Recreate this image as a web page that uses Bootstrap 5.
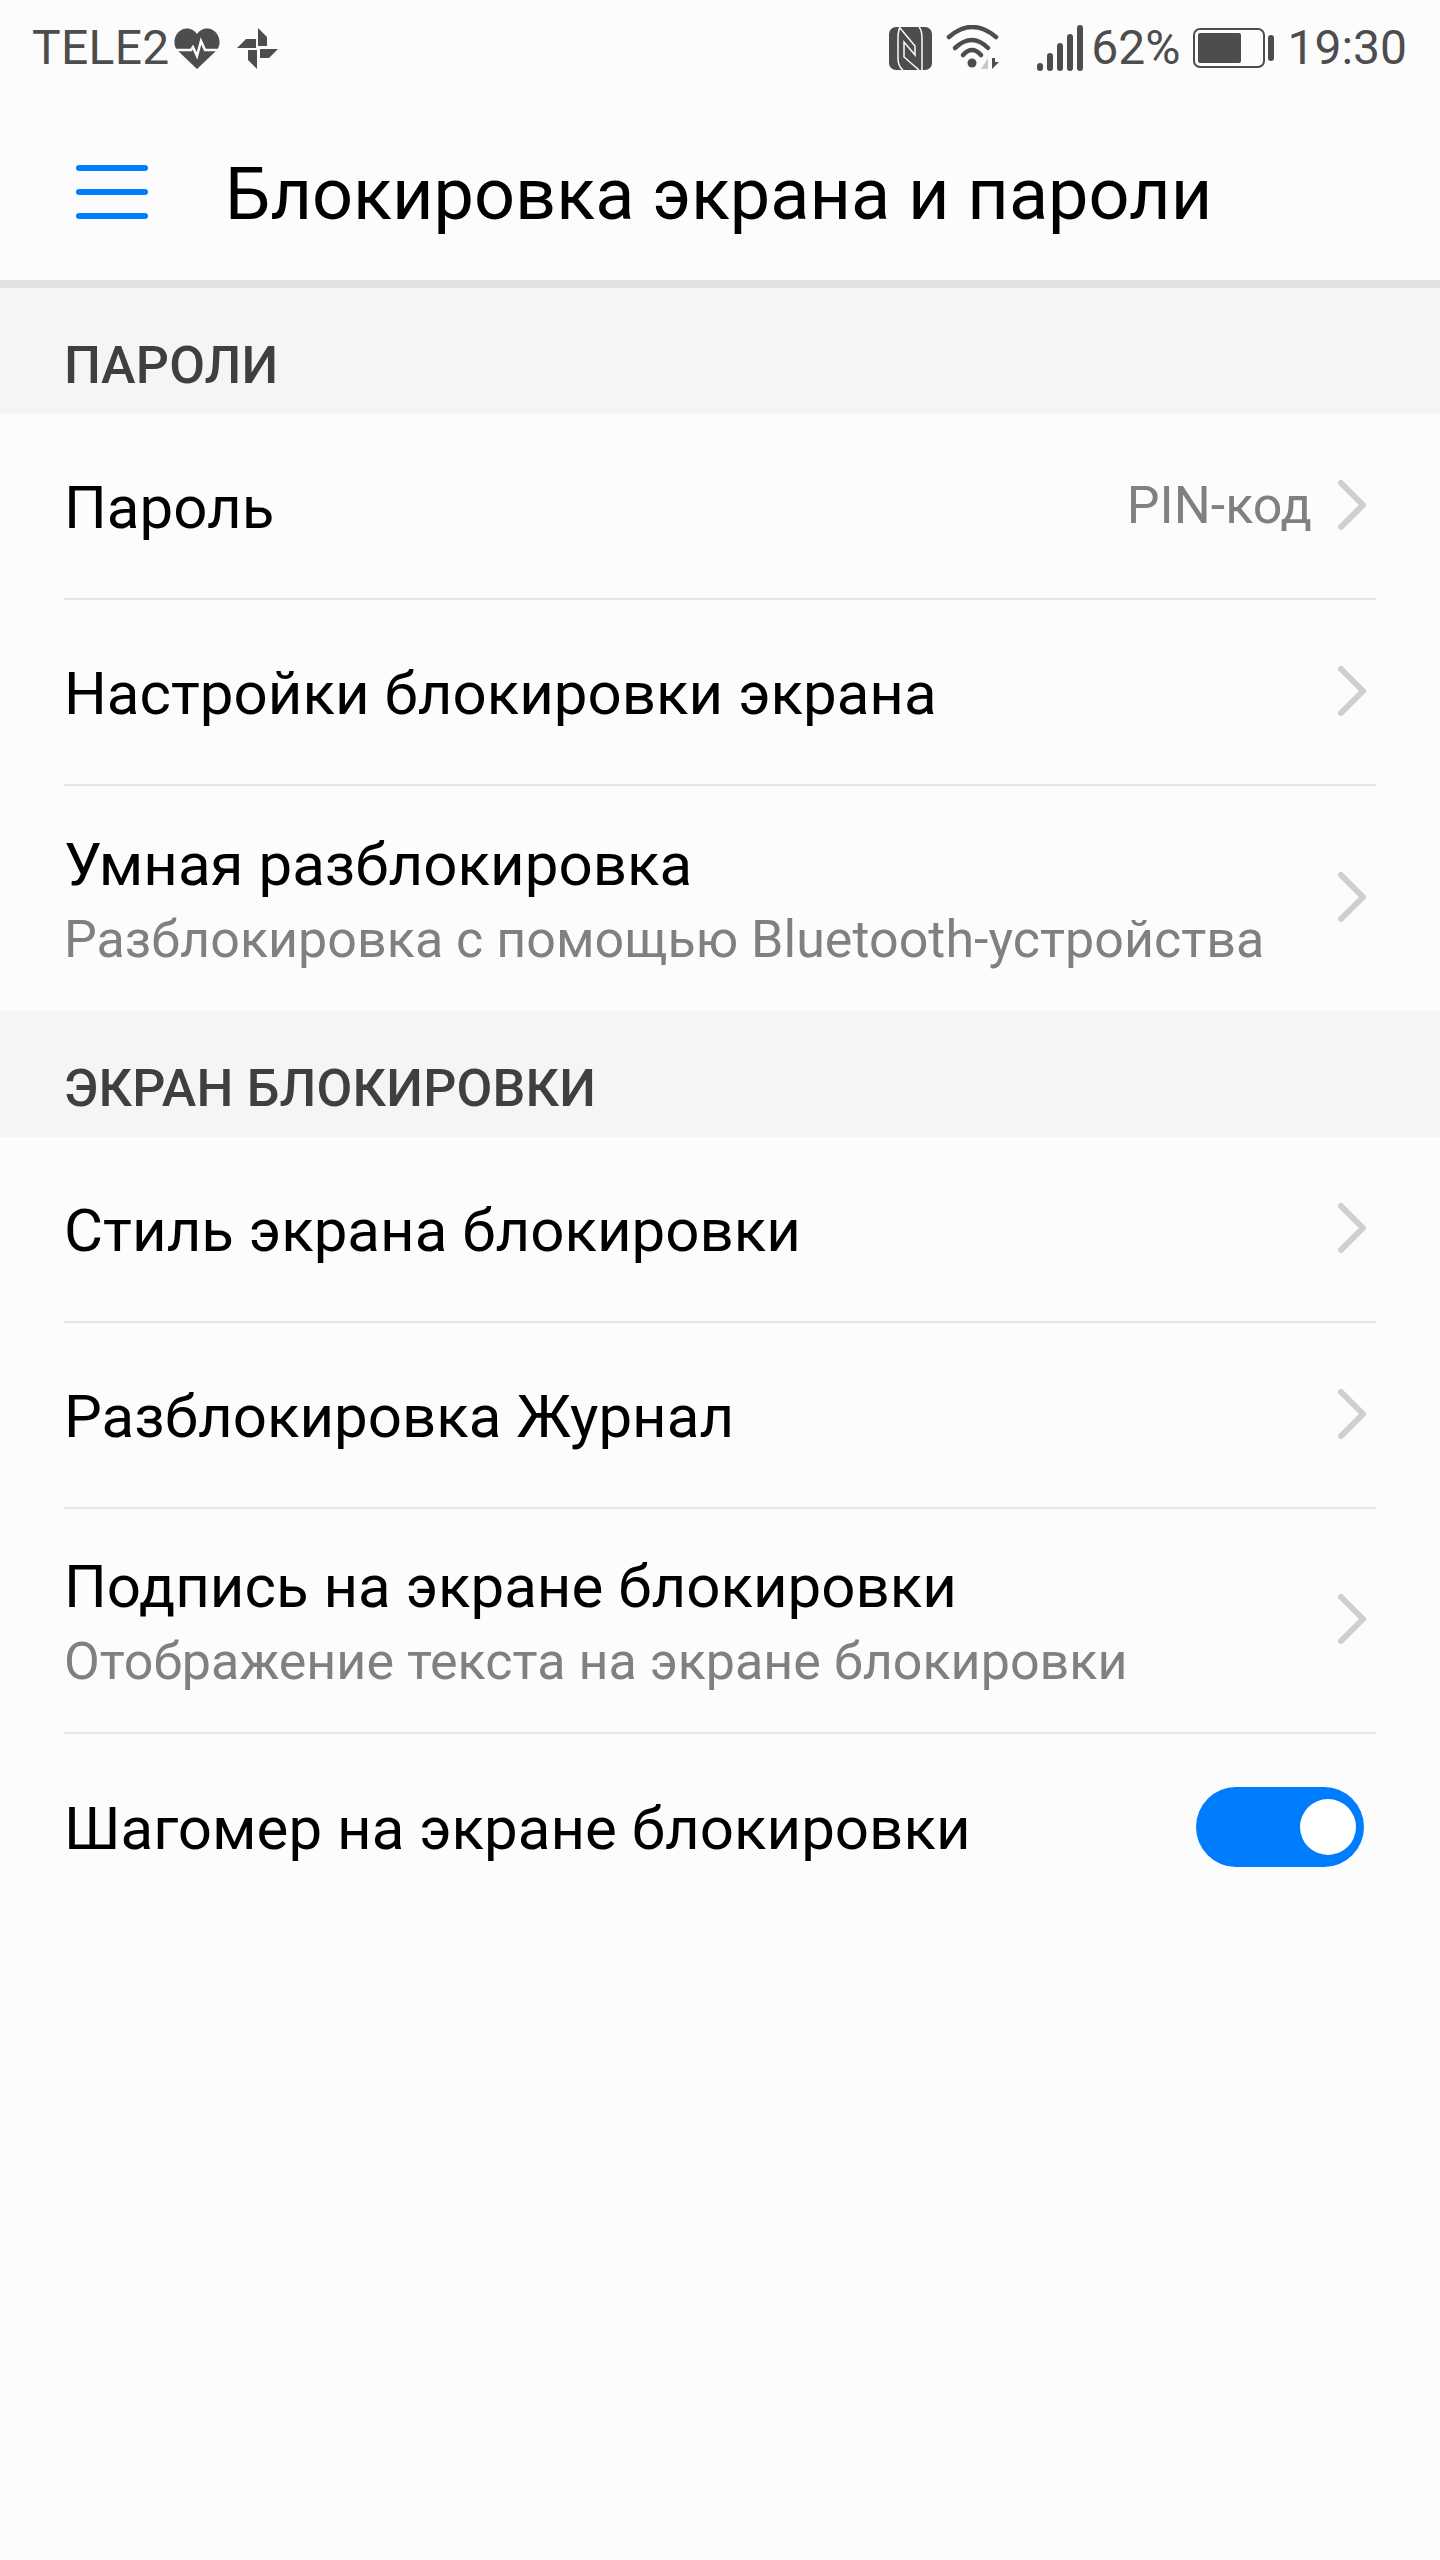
<!DOCTYPE html>
<html lang="ru">
<head>
  <meta charset="UTF-8">
  <title>Блокировка экрана и пароли</title>
  <link href="https://cdn.jsdelivr.net/npm/bootstrap@5.3.2/dist/css/bootstrap.min.css" rel="stylesheet">
  <style>
    body {
      background: #fcfcfc;
      font-family: Roboto, "Liberation Sans", sans-serif;
      min-height: 2560px;
    }
    .status-row {
      height: 96px;
      padding: 0 33px 0 32px;
      font-size: 48px;
      color: #4d4d4d;
      line-height: 1;
    }
    .status-row svg { display: block; fill: #4d4d4d; }
    .carrier-txt { letter-spacing: .3px; }
    .heart-ico { margin-left: 4px; }
    .pin-ico { margin-left: 17px; }
    .wifi-ico { margin-left: 14px; }
    .bars-ico { margin-left: 38px; }
    .batt-ico, .clock-txt { margin-left: 13px; }
    .app-head {
      height: 192px;
      padding: 8px 0 0 76px;
      border-bottom: 8px solid #e2e2e2;
      gap: 77px;
      box-sizing: border-box;
    }
    .menu-btn { width: 72px; height: 54px; padding: 0; border: 0; background: none; }
    .menu-btn svg { display: block; }
    .app-title { font-size: 72px; font-weight: 400; color: #000; margin: 5px 0 0; line-height: 1; }
    .group-title {
      background: #f5f5f5;
      color: #3f3f3f;
      font-size: 52px;
      font-weight: 500;
      letter-spacing: .2px;
      height: 126px;
      padding: 0 64px 22px;
      margin: 0;
      line-height: 1;
    }
    .set-rows { --bs-list-group-bg: transparent; }
    .set-rows .list-group-item {
      margin: 0 64px;
      padding: 0;
      height: 186px;
      border-color: #e6e6e6;
      border-bottom-width: 2px;
      background: transparent;
    }
    .set-rows .list-group-item.two-line { height: 225px; }
    .set-rows.open-end .list-group-item:last-child { border-bottom-width: 0; }
    .row-name { font-size: 60px; color: #000; line-height: 76px; letter-spacing: .03px; margin-top: 3px; }
    .two-line .row-name { margin-top: 2px; }
    .row-sub { font-size: 52px; color: #808080; line-height: 64px; letter-spacing: .03px; margin-top: 5px; }
    .row-val { font-size: 52px; color: #808080; line-height: 1; margin-right: 26px; }
    .row-go { display: block; margin: 0 10px 3px 0; flex: none; fill: none; stroke: #cfcfcf; stroke-width: 6; stroke-linecap: round; stroke-linejoin: round; }
    .form-switch .big-toggle,
    .form-switch .big-toggle:checked {
      width: 168px;
      height: 80px;
      margin: 0 12px 0 0;
      float: none;
      border: 0;
      border-radius: 40px;
      background-color: #007dff;
      background-image: url("data:image/svg+xml,%3csvg xmlns='http://www.w3.org/2000/svg' viewBox='-4 -4 8 8'%3e%3ccircle r='4' fill='%23fff'/%3e%3c/svg%3e");
      background-size: 56px 56px;
      background-position: right 8px center;
    }
    .form-switch.toggle-wrap { padding: 0; margin: 0; min-height: 0; }
  </style>
</head>
<body>

<!-- status bar -->
<div class="status-row d-flex align-items-center justify-content-between">
  <div class="d-flex align-items-center">
    <span class="carrier-txt">TELE2</span>
    <svg class="heart-ico" width="46" height="41" viewBox="0 0 46 41">
      <path d="M23 41 3 22C-2 16 0 2 12 .5 17 0 21 3 23 6c2-3 6-6 11-5.500C46 2 48 16 43 22z"/>
      <path d="M0 22h17l2-3 4 9 4-15 4 9h15" fill="none" stroke="#fcfcfc" stroke-width="2.500"/>
    </svg>
    <svg class="pin-ico" width="41" height="41" viewBox="0 0 41 41">
      <path d="M21 0l9 9v9h-9z"/>
      <path d="M0 20l9-9h10v9z"/>
      <path d="M11 22h9v19l-9-9z"/>
      <path d="M23 21h18l-9 9h-9z"/>
    </svg>
  </div>
  <div class="d-flex align-items-center">
    <svg width="43" height="43" viewBox="0 0 43 43">
      <rect width="43" height="43" rx="7"/>
      <g fill="none" stroke="#fcfcfc" stroke-width="1.500">
        <path d="M11 0C9 4 9 8 9 12v19c0 5 1 9 5 12"/>
        <path d="M11 1l15 18v9L15 15v15l15 13"/>
        <path d="M30 0c3 3 3 7 3 12v31"/>
      </g>
    </svg>
    <svg class="wifi-ico" width="53" height="46" viewBox="0 0 53 46">
      <g fill="none" stroke="#4d4d4d" stroke-width="4.500" stroke-linecap="round">
        <path d="M3 12Q26-8 50 12"/>
        <path d="M9 23Q26 7 42 23"/>
        <path d="M17 30Q26 20 35 30"/>
      </g>
      <circle cx="26" cy="38" r="4.500"/>
      <path d="M42 33v11h-7z" fill="#c8c8c8"/>
      <path d="M46 33h3v4h4l-7 7z"/>
    </svg>
    <svg class="bars-ico" width="46" height="46" viewBox="0 0 46 46">
      <rect x="0" y="38" width="6" height="8" rx="3"/>
      <rect x="10" y="28" width="6" height="18" rx="3"/>
      <rect x="20" y="18" width="6" height="28" rx="3"/>
      <rect x="30" y="9" width="6" height="37" rx="3"/>
      <rect x="40" y="0" width="6" height="46" rx="3"/>
    </svg>
    <span class="ms-2">62%</span>
    <svg class="batt-ico" width="81" height="40" viewBox="0 0 81 40">
      <rect x="1" y="1" width="70" height="38" rx="6" fill="none" stroke="#4d4d4d" stroke-width="2"/>
      <rect x="5" y="5" width="43" height="30" rx="2"/>
      <rect x="75" y="7" width="6" height="26" rx="3"/>
    </svg>
    <span class="clock-txt">19:30</span>
  </div>
</div>

<!-- header -->
<div class="app-head d-flex align-items-center">
  <button class="menu-btn" type="button" aria-label="Меню">
    <svg width="72" height="54" viewBox="0 0 72 54" fill="#007dff">
      <rect width="72" height="6" rx="3"/>
      <rect y="24" width="72" height="6" rx="3"/>
      <rect y="48" width="72" height="6" rx="3"/>
    </svg>
  </button>
  <h1 class="app-title">Блокировка экрана и пароли</h1>
</div>

<h2 class="group-title d-flex align-items-end">ПАРОЛИ</h2>
<div class="set-rows open-end list-group list-group-flush">
  <div class="list-group-item d-flex align-items-center justify-content-between">
    <span class="row-name">Пароль</span>
    <div class="d-flex align-items-center">
      <span class="row-val">PIN-код</span>
      <svg class="row-go" width="28" height="50" viewBox="0 0 28 50"><path d="M3 3l22 22L3 47"/></svg>
    </div>
  </div>
  <div class="list-group-item d-flex align-items-center justify-content-between">
    <span class="row-name">Настройки блокировки экрана</span>
    <svg class="row-go" width="28" height="50" viewBox="0 0 28 50"><path d="M3 3l22 22L3 47"/></svg>
  </div>
  <div class="list-group-item two-line d-flex align-items-center justify-content-between">
    <div>
      <div class="row-name">Умная разблокировка</div>
      <div class="row-sub">Разблокировка с помощью Bluetooth-устройства</div>
    </div>
    <svg class="row-go" width="28" height="50" viewBox="0 0 28 50"><path d="M3 3l22 22L3 47"/></svg>
  </div>
</div>

<h2 class="group-title d-flex align-items-end">ЭКРАН БЛОКИРОВКИ</h2>
<div class="set-rows list-group list-group-flush">
  <div class="list-group-item d-flex align-items-center justify-content-between">
    <span class="row-name">Стиль экрана блокировки</span>
    <svg class="row-go" width="28" height="50" viewBox="0 0 28 50"><path d="M3 3l22 22L3 47"/></svg>
  </div>
  <div class="list-group-item d-flex align-items-center justify-content-between">
    <span class="row-name">Разблокировка Журнал</span>
    <svg class="row-go" width="28" height="50" viewBox="0 0 28 50"><path d="M3 3l22 22L3 47"/></svg>
  </div>
  <div class="list-group-item two-line d-flex align-items-center justify-content-between">
    <div>
      <div class="row-name">Подпись на экране блокировки</div>
      <div class="row-sub">Отображение текста на экране блокировки</div>
    </div>
    <svg class="row-go" width="28" height="50" viewBox="0 0 28 50"><path d="M3 3l22 22L3 47"/></svg>
  </div>
  <div class="list-group-item d-flex align-items-center justify-content-between">
    <span class="row-name">Шагомер на экране блокировки</span>
    <div class="form-check form-switch toggle-wrap">
      <input class="form-check-input big-toggle" type="checkbox" role="switch" checked aria-label="Шагомер на экране блокировки">
    </div>
  </div>
</div>

<script src="https://cdn.jsdelivr.net/npm/bootstrap@5.3.2/dist/js/bootstrap.bundle.min.js"></script>
</body>
</html>
